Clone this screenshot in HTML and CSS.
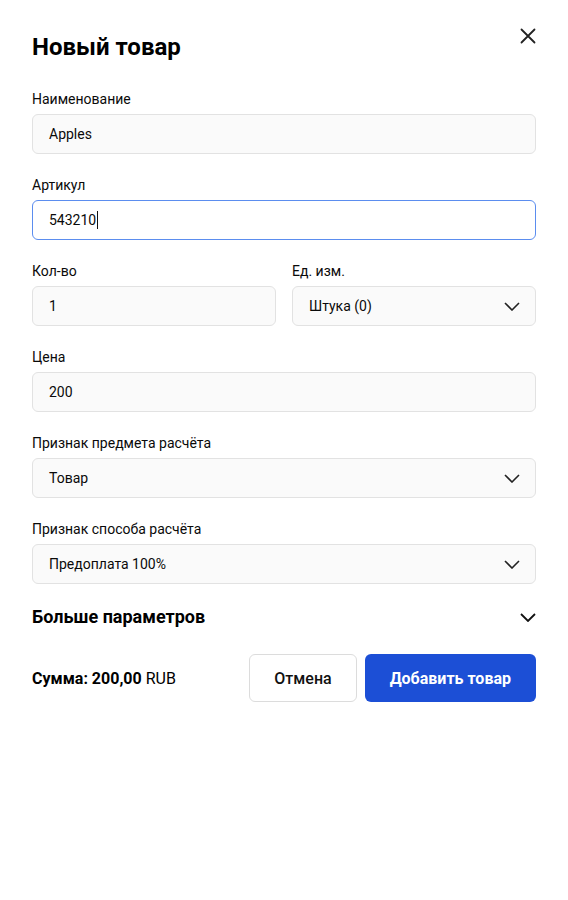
FILE: index.html
```html
<!DOCTYPE html>
<html lang="ru">
<head>
    <meta charset="UTF-8">
    <meta name="viewport" content="width=device-width, initial-scale=1.0">
    <title>Новый товар</title>
    <link rel="stylesheet" href="styles.css">
</head>
<body>
    <div class="modal">
        <div class="modal-head">
            <h1 class="title">Новый товар</h1>
            <button class="close" aria-label="Закрыть">
                <svg width="16" height="16" viewBox="0 0 16 16"><path d="M1.5 1.5l13 13M14.5 1.5l-13 13" stroke="#222" stroke-width="1.8" stroke-linecap="round"/></svg>
            </button>
        </div>

        <div class="field">
            <label>Наименование</label>
            <div class="input">Apples</div>
        </div>

        <div class="field">
            <label>Артикул</label>
            <div class="input focused">543210<span class="caret"></span></div>
        </div>

        <div class="row">
            <div class="field">
                <label>Кол-во</label>
                <div class="input">1</div>
            </div>
            <div class="field">
                <label>Ед. изм.</label>
                <div class="input select">
                    <span>Штука (0)</span>
                    <svg class="chevron" width="16" height="9" viewBox="0 0 16 9"><path d="M1 1l7 7 7-7" fill="none" stroke="#222" stroke-width="1.6"/></svg>
                </div>
            </div>
        </div>

        <div class="field">
            <label>Цена</label>
            <div class="input">200</div>
        </div>

        <div class="field">
            <label>Признак предмета расчёта</label>
            <div class="input select">
                <span>Товар</span>
                <svg class="chevron" width="16" height="9" viewBox="0 0 16 9"><path d="M1 1l7 7 7-7" fill="none" stroke="#222" stroke-width="1.6"/></svg>
            </div>
        </div>

        <div class="field">
            <label>Признак способа расчёта</label>
            <div class="input select">
                <span>Предоплата 100%</span>
                <svg class="chevron" width="16" height="9" viewBox="0 0 16 9"><path d="M1 1l7 7 7-7" fill="none" stroke="#222" stroke-width="1.6"/></svg>
            </div>
        </div>

        <div class="more">
            <span>Больше параметров</span>
            <svg width="16" height="9" viewBox="0 0 16 9"><path d="M1 1l7 7 7-7" fill="none" stroke="#111" stroke-width="1.8"/></svg>
        </div>

        <div class="footer">
            <div class="sum"><b>Сумма: 200,00</b> RUB</div>
            <div class="actions">
                <button class="btn btn-cancel">Отмена</button>
                <button class="btn btn-primary">Добавить товар</button>
            </div>
        </div>
    </div>
</body>
</html>
```

FILE: styles.css
```css
body {
    margin: 0;
    background: #fff;
    font-family: Roboto, "Liberation Sans", Arial, sans-serif;
    color: #111;
}
.modal {
    padding: 28px 32px 40px;
}
.modal-head {
    display: flex;
    justify-content: space-between;
    align-items: flex-start;
    margin-bottom: 26px;
}
.title {
    margin: 3px 0 0;
    font-size: 24px;
    line-height: 32px;
    font-weight: 700;
    color: #000;
}
.close {
    background: none;
    border: none;
    padding: 0;
    width: 16px;
    height: 16px;
    cursor: pointer;
    display: flex;
}
.field {
    margin-bottom: 21px;
}
.field label {
    display: block;
    font-size: 14px;
    line-height: 20px;
    margin-bottom: 5px;
    color: #0a0a0a;
}
.input {
    box-sizing: border-box;
    height: 40px;
    border: 1px solid #e2e2e2;
    border-radius: 6px;
    background: #fafafa;
    padding: 0 16px;
    display: flex;
    align-items: center;
    font-size: 14px;
    color: #0a0a0a;
}
.input.focused {
    border-color: #5b8def;
    background: #fff;
}
.caret {
    display: inline-block;
    width: 1px;
    height: 18px;
    background: #111;
    margin-left: 1px;
}
.select {
    justify-content: space-between;
    padding-right: 15px;
}
.row {
    display: grid;
    grid-template-columns: 1fr 1fr;
    gap: 16px;
}
.more {
    display: flex;
    justify-content: space-between;
    align-items: center;
    font-size: 18px;
    line-height: 24px;
    font-weight: 700;
    margin-top: 21px;
    color: #000;
}
.footer {
    display: flex;
    justify-content: space-between;
    align-items: center;
    margin-top: 25px;
}
.sum {
    font-size: 16px;
    color: #000;
}
.actions {
    display: flex;
    gap: 8px;
}
.btn {
    height: 48px;
    border-radius: 6px;
    font-family: inherit;
    font-size: 16px;
    padding: 0 24px;
    cursor: pointer;
}
.btn-cancel {
    background: #fff;
    border: 1px solid #dcdcdc;
    color: #111;
    font-weight: 500;
}
.btn-primary {
    background: #1c4fd6;
    border: none;
    color: #fff;
    font-weight: 700;
    padding: 0 25px;
}
```
